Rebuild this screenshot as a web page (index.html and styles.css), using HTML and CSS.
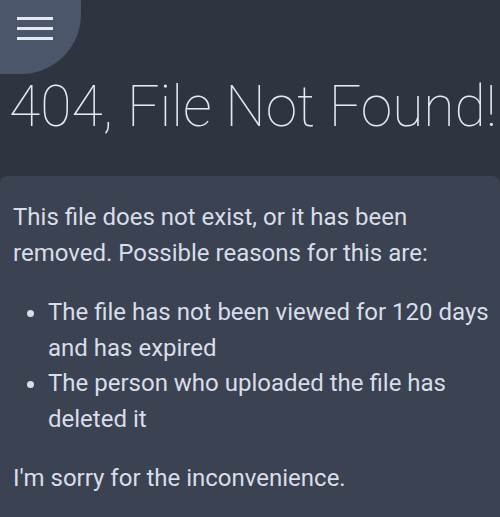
FILE: index.html
```html
<!DOCTYPE html>
<html lang="en">
<head>
<meta charset="utf-8">
<title>404, File Not Found!</title>
<link rel="stylesheet" href="styles.css">
</head>
<body>
<header class="top">
  <button class="menu" aria-label="Menu">
    <span class="bar"></span>
    <span class="bar"></span>
    <span class="bar"></span>
  </button>
  <h1 class="title">404, File Not Found!</h1>
</header>
<main class="card">
  <p class="para">This file does not exist, or it has been removed. Possible reasons for this are:</p>
  <ul class="reasons">
    <li>The file has not been viewed for 120 days and has expired</li>
    <li>The person who uploaded the file has deleted it</li>
  </ul>
  <p class="para">I'm sorry for the inconvenience.</p>
</main>
</body>
</html>
```
FILE: styles.css
```css
html, body {
  margin: 0;
  padding: 0;
  background: #2e3440;
  color: #d8dee9;
  font-family: Roboto, "Liberation Sans", sans-serif;
}
body {
  min-height: 100vh;
  display: flex;
  flex-direction: column;
}
.top {
  display: flex;
  flex-direction: column;
}
.menu {
  width: 81px;
  height: 74px;
  border: none;
  padding: 17px 0 0 17px;
  margin: 0;
  background: #4c566a;
  border-bottom-right-radius: 60px;
  display: flex;
  flex-direction: column;
  gap: 7px;
  cursor: pointer;
}
.bar {
  display: block;
  width: 36px;
  height: 3px;
  background: #e5e9f0;
}
.title {
  margin: 0;
  padding: 0 0 0 9px;
  font-weight: 100;
  font-size: 57px;
  line-height: 66px;
  color: #e5e9f0;
  white-space: nowrap;
}
.card {
  flex: 1;
  margin-top: 36px;
  background: #3b4252;
  border-radius: 8px 8px 0 0;
  padding: 24px 4px 18px 13px;
  font-size: 24px;
  line-height: 35.5px;
}
.para {
  margin: 24px 0;
}
.para:first-child {
  margin-top: 0;
}
.para:last-child {
  margin-bottom: 0;
}
.reasons {
  margin: 24px 0;
  padding-left: 35px;
}
```
